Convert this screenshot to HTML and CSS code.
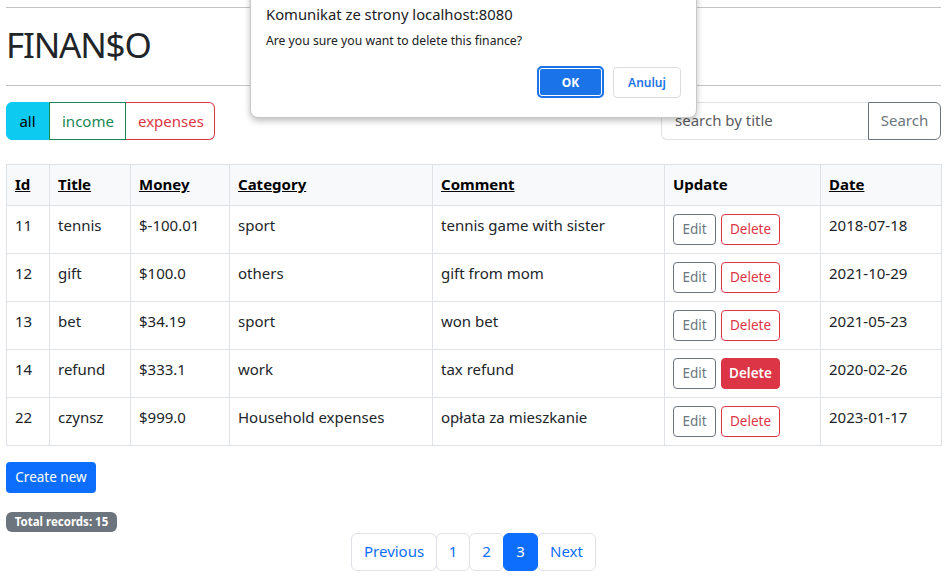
FILE: index.html
```html
<!DOCTYPE html>
<html lang="pl">
<head>
<meta charset="utf-8">
<title>FINAN$O</title>
<link rel="stylesheet" href="styles.css">
</head>
<body>
<div class="page">
  <hr class="rule">
  <h1 class="brand">FINAN$O</h1>
  <hr class="rule">
  <div class="toolbar">
    <div class="filter-group">
      <button class="filter filter-all">all</button>
      <button class="filter filter-income">income</button>
      <button class="filter filter-expenses">expenses</button>
    </div>
    <form class="search">
      <input class="search-input" type="text" placeholder="search by title">
      <button class="search-btn" type="button">Search</button>
    </form>
  </div>

  <table class="finances">
    <colgroup>
      <col class="c-id"><col class="c-title"><col class="c-money"><col class="c-cat"><col class="c-comment"><col class="c-update"><col class="c-date">
    </colgroup>
    <thead>
      <tr>
        <th><a href="#">Id</a></th>
        <th><a href="#">Title</a></th>
        <th><a href="#">Money</a></th>
        <th><a href="#">Category</a></th>
        <th><a href="#">Comment</a></th>
        <th>Update</th>
        <th><a href="#">Date</a></th>
      </tr>
    </thead>
    <tbody>
      <tr>
        <td>11</td><td>tennis</td><td>$-100.01</td><td>sport</td><td>tennis game with sister</td>
        <td><div class="actions"><button class="btn-edit">Edit</button><button class="btn-delete">Delete</button></div></td>
        <td>2018-07-18</td>
      </tr>
      <tr>
        <td>12</td><td>gift</td><td>$100.0</td><td>others</td><td>gift from mom</td>
        <td><div class="actions"><button class="btn-edit">Edit</button><button class="btn-delete">Delete</button></div></td>
        <td>2021-10-29</td>
      </tr>
      <tr>
        <td>13</td><td>bet</td><td>$34.19</td><td>sport</td><td>won bet</td>
        <td><div class="actions"><button class="btn-edit">Edit</button><button class="btn-delete">Delete</button></div></td>
        <td>2021-05-23</td>
      </tr>
      <tr>
        <td>14</td><td>refund</td><td>$333.1</td><td>work</td><td>tax refund</td>
        <td><div class="actions"><button class="btn-edit">Edit</button><button class="btn-delete is-active">Delete</button></div></td>
        <td>2020-02-26</td>
      </tr>
      <tr>
        <td>22</td><td>czynsz</td><td>$999.0</td><td>Household expenses</td><td>opłata za mieszkanie</td>
        <td><div class="actions"><button class="btn-edit">Edit</button><button class="btn-delete">Delete</button></div></td>
        <td>2023-01-17</td>
      </tr>
    </tbody>
  </table>

  <button class="btn-create">Create new</button>
  <div class="total"><span class="badge">Total records: 15</span></div>

  <nav class="pager">
    <a class="page-link" href="#">Previous</a>
    <a class="page-link" href="#">1</a>
    <a class="page-link" href="#">2</a>
    <a class="page-link is-current" href="#">3</a>
    <a class="page-link" href="#">Next</a>
  </nav>
</div>

<div class="dialog" role="dialog">
  <div class="dialog-title">Komunikat ze strony localhost:8080</div>
  <div class="dialog-msg">Are you sure you want to delete this finance?</div>
  <div class="dialog-actions">
    <button class="dlg-ok">OK</button>
    <button class="dlg-cancel">Anuluj</button>
  </div>
</div>
</body>
</html>
```
FILE: styles.css
```css
html, body {
  margin: 0;
  padding: 0;
  background: #fff;
}
body {
  font-family: "Noto Sans", "Open Sans", sans-serif;
  font-size: 15px;
  color: #212529;
  line-height: 24px;
}
.page {
  padding: 7px 7px 0 6px;
}
.rule {
  margin: 0;
  border: 0;
  border-top: 1px solid #c4c4c4;
  height: 0;
}
.brand {
  margin: 13px 0 16px;
  font-size: 35px;
  line-height: 48px;
  font-weight: 400;
  letter-spacing: -1.2px;
  color: #212529;
}
.toolbar {
  margin-top: 16px;
  display: flex;
  justify-content: space-between;
  align-items: center;
  height: 38px;
}
.filter-group {
  display: flex;
  height: 38px;
}
.filter {
  font: inherit;
  font-size: 15px;
  height: 38px;
  padding: 0 12px;
  background: #fff;
  border: 1px solid;
  margin: 0;
  cursor: pointer;
}
.filter-all {
  width: 43px;
  background: #0dcaf0;
  border-color: #0dcaf0;
  color: #000;
  border-radius: 6px 0 0 6px;
}
.filter-income {
  width: 77px;
  border-color: #198754;
  color: #198754;
}
.filter-expenses {
  width: 89px;
  border-color: #dc3545;
  color: #dc3545;
  border-left: 0;
  border-radius: 0 6px 6px 0;
}
.search {
  display: flex;
  margin: 0;
}
.search-input {
  width: 207px;
  height: 38px;
  box-sizing: border-box;
  border: 1px solid #dee2e6;
  border-right: 0;
  border-radius: 6px 0 0 6px;
  padding: 0 13px 2px;
  font: inherit;
  font-size: 15px;
  color: #212529;
}
.search-input::placeholder {
  color: #595c5f;
}
.search-btn {
  width: 73px;
  height: 38px;
  box-sizing: border-box;
  border: 1px solid #6c757d;
  border-radius: 0 6px 6px 0;
  background: #fff;
  color: #6c757d;
  font: inherit;
  font-size: 15px;
  padding: 0 0 2px;
}

.finances {
  margin-top: 24px;
  width: 935px;
  table-layout: fixed;
  border-collapse: collapse;
}
.c-id { width: 43px; }
.c-title { width: 81px; }
.c-money { width: 99px; }
.c-cat { width: 203px; }
.c-comment { width: 232px; }
.c-update { width: 156px; }
.c-date { width: 121px; }
.finances th,
.finances td {
  border: 1px solid #dee2e6;
  padding: 7px 8px 9px;
  text-align: left;
  vertical-align: top;
  white-space: nowrap;
}
.finances thead th {
  background: #f8f9fa;
  font-weight: 700;
  color: #000;
  height: 24px;
}
.finances thead a {
  color: #000;
  text-decoration: underline;
}
.finances tbody td {
  height: 31px;
}
.actions {
  display: flex;
  gap: 5px;
  margin-top: 1px;
  margin-bottom: -1px;
}
.btn-edit,
.btn-delete {
  font: inherit;
  font-size: 13.5px;
  height: 31px;
  box-sizing: border-box;
  padding: 0 7px;
  background: #fff;
  border-radius: 4px;
  border: 1px solid;
  line-height: 29px;
}
.btn-edit {
  width: 43px;
  border-color: #6c757d;
  color: #6c757d;
}
.btn-delete {
  width: 59px;
  border-color: #dc3545;
  color: #dc3545;
}
.btn-delete.is-active {
  background: #dc3545;
  color: #fff;
  font-weight: 600;
}

.btn-create {
  display: block;
  margin-top: 16px;
  width: 90px;
  height: 31px;
  border: 0;
  border-radius: 4px;
  background: #0d6efd;
  color: #fff;
  font: inherit;
  font-size: 13.5px;
  padding: 0 0 1px;
}
.total {
  margin-top: 19px;
  height: 20px;
  display: flex;
}
.badge {
  display: inline-block;
  height: 20px;
  line-height: 20px;
  padding: 0 8px;
  width: 95px;
  text-align: center;
  border-radius: 6px;
  background: #6c757d;
  color: #fff;
  font-size: 11.5px;
  font-weight: 700;
}
.pager {
  margin-top: 1px;
  display: flex;
  justify-content: center;
}
.page-link {
  display: block;
  height: 38px;
  box-sizing: border-box;
  line-height: 35px;
  border: 1px solid #dee2e6;
  border-radius: 6px;
  margin-left: -1px;
  padding: 0 12px;
  color: #0d6efd;
  text-decoration: none;
  font-size: 15px;
  text-align: center;
  background: #fff;
}
.page-link:nth-child(1) { width: 86px; margin-left: 0; }
.page-link:nth-child(2) { width: 34px; padding: 0; }
.page-link:nth-child(3) { width: 35px; padding: 0; }
.page-link:nth-child(4) { width: 35px; padding: 0; }
.page-link:nth-child(5) { width: 59px; padding: 0; }
.page-link.is-current {
  background: #0d6efd;
  border-color: #0d6efd;
  color: #fff;
  position: relative;
}

.dialog {
  position: absolute;
  left: 250px;
  top: -20px;
  width: 447px;
  height: 138px;
  box-sizing: border-box;
  background: #fff;
  border: 1px solid #c8c8c8;
  border-radius: 0 0 8px 8px;
  box-shadow: 0 3px 6px rgba(0, 0, 0, 0.25);
  padding: 21px 15px 0 15px;
  font-family: "Noto Sans", "Open Sans", sans-serif;
  color: #202124;
}
.dialog-title {
  font-size: 14.8px;
  line-height: 24px;
}
.dialog-msg {
  margin-top: 5px;
  font-size: 12.2px;
  line-height: 20px;
}
.dialog-actions {
  margin-top: 15px;
  display: flex;
  justify-content: flex-end;
  gap: 9px;
  padding-right: 0;
}
.dlg-ok {
  width: 67px;
  height: 32px;
  box-sizing: border-box;
  background: #1a73e8;
  color: #fff;
  border: 2px solid #1a73e8;
  border-radius: 5px;
  font-family: inherit;
  font-weight: 700;
  font-size: 12px;
  box-shadow: inset 0 0 0 1px #fff;
  padding: 0;
}
.dlg-cancel {
  width: 68px;
  height: 31px;
  margin-top: 1px;
  box-sizing: border-box;
  background: #fff;
  color: #1a73e8;
  border: 1px solid #dadce0;
  border-radius: 4px;
  font-family: inherit;
  font-weight: 600;
  font-size: 12px;
  padding: 0;
}
```
